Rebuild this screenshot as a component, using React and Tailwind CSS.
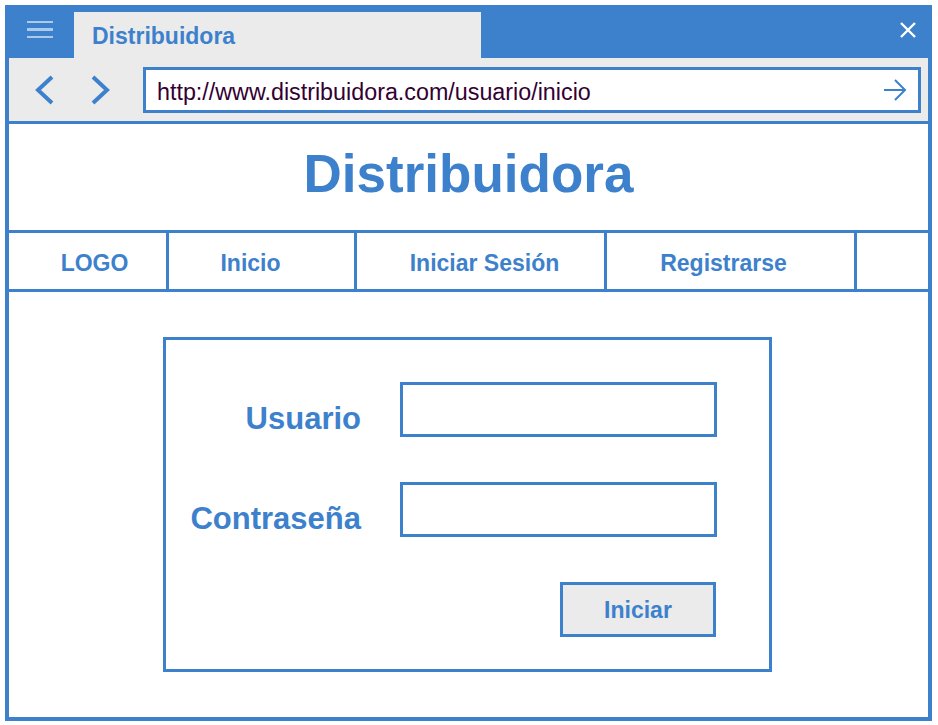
import React from "react";

const font = "font-['Liberation_Sans',Arial,sans-serif]";

function NavCell({ width, label, shift, last }) {
    return (
        <div
            className={`flex h-full items-center justify-center ${last ? "" : "border-r-[3px] border-[#3d81cd]"} ${width}`}
        >
            {label && <span className={`mt-[4px] text-[23px] font-bold text-[#3d81cd] ${shift}`}>{label}</span>}
        </div>
    );
}

export default function App() {
    return (
        <div className={`w-[938px] h-[725px] bg-white pt-[5px] pl-[5px] ${font}`}>
            {/* Browser frame */}
            <div className="flex w-[927px] h-[716px] flex-col bg-[#3d81cd]">
                {/* Title bar */}
                <div className="flex h-[53px] shrink-0">
                    <div className="flex w-[69px] flex-col items-center justify-center gap-[5px] pb-[4px]">
                        <span className="block h-[2.5px] w-[26px] bg-[#abcaec]" />
                        <span className="block h-[2.5px] w-[26px] bg-[#abcaec]" />
                        <span className="block h-[2.5px] w-[26px] bg-[#abcaec]" />
                    </div>
                    <div className="mt-[7px] flex h-[46px] w-[407px] items-center bg-[#ebebeb] pl-[18px] pt-[2px]">
                        <span className="text-[23px] font-bold text-[#3d81cd]">Distribuidora</span>
                    </div>
                    <div className="flex flex-1 items-center justify-end pr-[15px] pb-[4px]">
                        <svg width="18" height="18" viewBox="0 0 18 18">
                            <path d="M2 2 L16 16 M16 2 L2 16" stroke="white" strokeWidth="2.4" />
                        </svg>
                    </div>
                </div>

                <div className="mx-[4px] mb-[4px] flex flex-1 flex-col">
                    {/* Toolbar */}
                    <div className="flex h-[66px] shrink-0 items-center border-b-[3px] border-[#3d81cd] bg-[#ebebeb] pl-[25px]">
                        <svg width="20" height="30" viewBox="0 0 20 30">
                            <polyline points="18,2 4,15 18,28" fill="none" stroke="#3d81cd" strokeWidth="4" />
                        </svg>
                        <svg width="20" height="30" viewBox="0 0 20 30" className="ml-[37px]">
                            <polyline points="2,2 16,15 2,28" fill="none" stroke="#3d81cd" strokeWidth="4" />
                        </svg>
                        <div className="ml-[32px] flex h-[46px] w-[778px] items-center justify-between border-[3px] border-[#3d81cd] bg-white pl-[11px] pr-[11px]">
                            <span className="mt-[5px] text-[23.3px] text-[#330033]">http://www.distribuidora.com/usuario/inicio</span>
                            <svg width="24" height="22" viewBox="0 0 24 22">
                                <path d="M1 11 H22 M12 1 L22 11 L12 21" fill="none" stroke="#3d81cd" strokeWidth="2" />
                            </svg>
                        </div>
                    </div>

                    {/* Page content */}
                    <div className="flex flex-1 flex-col bg-white">
                        <div className="flex h-[106px] items-center justify-center pb-[6px]">
                            <h1 className="text-[53px] font-bold text-[#3d81cd]">Distribuidora</h1>
                        </div>

                        <div className="flex h-[62px] border-y-[3px] border-[#3d81cd]">
                            <NavCell width="w-[160px]" label="LOGO" shift="ml-[14px]" />
                            <NavCell width="w-[188px]" label="Inicio" shift="mr-[22px]" />
                            <NavCell width="w-[250px]" label="Iniciar Sesión" shift="ml-[8px]" />
                            <NavCell width="w-[250px]" label="Registrarse" shift="mr-[14px]" />
                            <NavCell width="flex-1" last />
                        </div>

                        {/* Login box */}
                        <div className="ml-[154px] mt-[45px] h-[335px] w-[609px] border-[3px] border-[#3d81cd] pt-[42px]">
                            <div className="flex h-[55px] items-center">
                                <label className="mt-[19px] w-[195px] text-right text-[31px] font-bold text-[#3d81cd]">Usuario</label>
                                <div className="ml-[39px] h-[55px] w-[317px] border-[3px] border-[#3d81cd] bg-white" />
                            </div>
                            <div className="mt-[45px] flex h-[55px] items-center">
                                <label className="mt-[19px] w-[195px] text-right text-[31px] font-bold text-[#3d81cd]">Contraseña</label>
                                <div className="ml-[39px] h-[55px] w-[317px] border-[3px] border-[#3d81cd] bg-white" />
                            </div>
                            <button className="ml-[394px] mt-[45px] flex h-[55px] w-[156px] items-center justify-center border-[3px] border-[#3d81cd] bg-[#ebebeb] pt-[2px] text-[23px] font-bold text-[#3d81cd]">
                                Iniciar
                            </button>
                        </div>
                    </div>
                </div>
            </div>
        </div>
    );
}
